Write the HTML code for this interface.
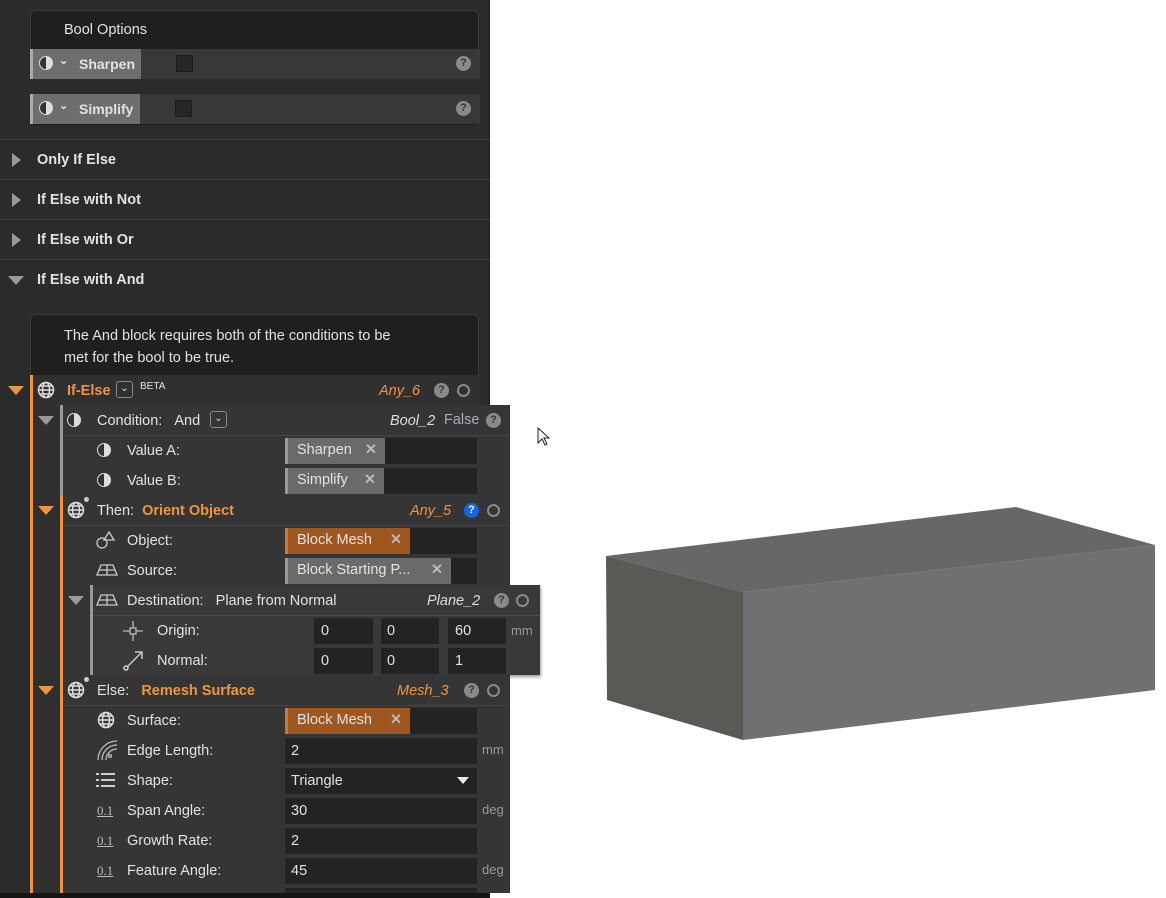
<!DOCTYPE html><html><head><style>
*{margin:0;padding:0;box-sizing:border-box}
body{width:1166px;height:898px;background:#fff;position:relative;overflow:hidden;font-family:"Liberation Sans",sans-serif;font-size:14px;color:#e2e2e2}
.a{position:absolute}
.hdr{position:absolute;left:0;width:490px;height:40px;border-top:1px solid #3e3e3e;font-weight:bold;font-size:14.5px;padding:12px 0 0 37px}
.tri{position:absolute;width:0;height:0}
.tr{border-top:7px solid transparent;border-bottom:7px solid transparent;border-left:9px solid #9a9a9a}
.td{border-left:8px solid transparent;border-right:8px solid transparent;border-top:9px solid #9a9a9a}
.to{border-left:8px solid transparent;border-right:8px solid transparent;border-top:9px solid #f0953f}
.q{position:absolute;width:15px;height:15px;border-radius:50%;background:#8a8a8a;color:#333;font-size:11px;font-weight:bold;text-align:center;line-height:15px}
.o{position:absolute;width:13px;height:13px;border-radius:50%;border:2.5px solid #8a8a8a}
.fld{position:absolute;height:26px;background:#232323}
.chip{position:absolute;height:26px;background:#6a6a6a;border-left:3px solid #9a9a9a;padding:4px 0 0 9px;font-size:14.5px}
.chip.or{background:#a0561f;border-left-color:#c77a3a}
.x{position:absolute;right:8px;top:4px;color:#bbb;font-weight:bold}
.lbl{position:absolute;font-size:14.5px}
.ital{font-style:italic;color:#f0953f;position:absolute;font-size:14.5px}
.org{color:#f0953f}
.half{position:absolute;width:14px;height:14px;border-radius:50%;border:1.5px solid #ddd;background:linear-gradient(90deg,#333 50%,#ddd 50%)}
.unit{position:absolute;color:#9a9a9a;font-size:13px}
</style></head><body>
<div class="a" style="left:0;top:0;width:490px;height:893px;background:#2b2b2b;border-right:1px solid #1e1e1e"></div>
<div class="a" style="left:0;top:893px;width:490px;height:5px;background:#151515"></div>
<!-- bool options -->
<div class="a" style="left:30px;top:10px;width:449px;height:115px;background:#1f1f1f;border:1px solid #3a3a3a;border-bottom:none;border-radius:6px 6px 0 0"></div>
<div class="lbl" style="left:64px;top:22px">Bool Options</div>
<div class="a" style="left:30px;top:49px;width:450px;height:30px;background:#383838"></div>
<div class="a" style="left:30px;top:94px;width:450px;height:30px;background:#383838"></div>
<div class="a" style="left:30px;top:79px;width:450px;height:15px;background:#2b2b2b"></div>
<div class="a" style="left:30px;top:49px;width:111px;height:30px;background:#6e6e6e;border-left:3px solid #aaa"></div>
<div class="a" style="left:30px;top:94px;width:110px;height:30px;background:#6e6e6e;border-left:3px solid #aaa"></div>
<div class="half" style="left:39px;top:56px"></div><div class="a" style="left:59px;top:54px;font-size:11px;font-weight:bold">⌄</div>
<div class="half" style="left:39px;top:101px"></div><div class="a" style="left:59px;top:99px;font-size:11px;font-weight:bold">⌄</div>
<div class="lbl" style="left:79px;top:56px;font-weight:bold;font-size:14px">Sharpen</div>
<div class="lbl" style="left:79px;top:101px;font-weight:bold;font-size:14px">Simplify</div>
<div class="a" style="left:176px;top:55px;width:17px;height:17px;background:#262626;border:1px solid #1c1c1c"></div>
<div class="a" style="left:175px;top:100px;width:17px;height:17px;background:#262626;border:1px solid #1c1c1c"></div>
<div class="q" style="left:456px;top:56px">?</div><div class="q" style="left:456px;top:101px">?</div>
<!-- headers -->
<div class="hdr" style="top:139px">Only If Else</div><div class="tri tr" style="left:12px;top:153px"></div>
<div class="hdr" style="top:179px">If Else with Not</div><div class="tri tr" style="left:12px;top:193px"></div>
<div class="hdr" style="top:219px">If Else with Or</div><div class="tri tr" style="left:12px;top:233px"></div>
<div class="hdr" style="top:259px">If Else with And</div><div class="tri td" style="left:8px;top:276px"></div>
<!-- text card -->
<div class="a" style="left:30px;top:314px;width:449px;height:62px;background:#1f1f1f;border:1px solid #3a3a3a;border-bottom:none;border-radius:6px 6px 0 0"></div>
<div class="lbl" style="left:64px;top:325px;line-height:22px">The And block requires both of the conditions to be<br>met for the bool to be true.</div>
<!-- if-else -->
<div class="a" style="left:30px;top:375px;width:450px;height:518px;background:#303030;border-left:3px solid #f0953f"></div>
<div class="tri to" style="left:8px;top:386px"></div>
<svg class="a" style="left:37px;top:381px" width="18" height="18" viewBox="0 0 18 18" fill="none" stroke="#ddd" stroke-width="1.5"><circle cx="9" cy="9" r="7.5"/><ellipse cx="9" cy="9" rx="3.5" ry="7.5"/><path d="M1.5 9h15M3 5h12M3 13h12"/></svg>
<div class="lbl org" style="left:67px;top:383px;font-weight:bold">If-Else</div>
<div class="a" style="left:116px;top:381px;width:17px;height:17px;border:1.5px solid #888;border-radius:3px;font-size:10px;text-align:center;line-height:13px">⌄</div>
<div class="a" style="left:140px;top:381px;font-size:10px">BETA</div>
<div class="ital" style="left:379px;top:383px">Any_6</div>
<div class="q" style="left:434px;top:383px">?</div><div class="o" style="left:457px;top:384px"></div>
<!-- condition block -->
<div class="a" style="left:60px;top:405px;width:450px;height:90px;background:#353535;border-left:3px solid #999"></div>
<div class="a" style="left:63px;top:435px;width:447px;height:1px;background:#454545"></div>
<div class="tri td" style="left:38px;top:416px"></div>
<div class="half" style="left:67px;top:413px"></div>
<div class="lbl" style="left:97px;top:413px">Condition:&nbsp;&nbsp;&nbsp;And</div>
<div class="a" style="left:210px;top:411px;width:17px;height:17px;border:1.5px solid #888;border-radius:3px;font-size:10px;text-align:center;line-height:13px">⌄</div>
<div class="ital" style="left:390px;top:413px;color:#ddd">Bool_2</div>
<div class="lbl" style="left:444px;top:412px;color:#aab">False</div>
<div class="q" style="left:486px;top:413px">?</div>
<div class="half" style="left:97px;top:443px"></div><div class="lbl" style="left:127px;top:443px">Value A:</div>
<div class="half" style="left:97px;top:473px"></div><div class="lbl" style="left:127px;top:473px">Value B:</div>
<div class="fld" style="left:285px;top:438px;width:192px"></div><div class="chip" style="left:285px;top:438px;width:100px">Sharpen<span class="x">✕</span></div>
<div class="fld" style="left:285px;top:468px;width:192px"></div><div class="chip" style="left:285px;top:468px;width:99px">Simplify<span class="x">✕</span></div>
<!-- then block -->
<div class="a" style="left:60px;top:495px;width:450px;height:180px;background:#353535;border-left:3px solid #f0953f"></div>
<div class="a" style="left:63px;top:525px;width:447px;height:1px;background:#454545"></div>
<div class="tri to" style="left:38px;top:506px"></div>
<svg class="a" style="left:67px;top:501px" width="18" height="18" viewBox="0 0 18 18" fill="none" stroke="#ddd" stroke-width="1.5"><circle cx="9" cy="9" r="7.5"/><ellipse cx="9" cy="9" rx="3.5" ry="7.5"/><path d="M1.5 9h15M3 5h12M3 13h12"/></svg>
<div class="a" style="left:84px;top:497px;width:5px;height:5px;border-radius:50%;background:#ccc"></div>
<div class="lbl" style="left:97px;top:503px">Then:&nbsp;&nbsp;<b class="org">Orient Object</b></div>
<div class="ital" style="left:410px;top:503px">Any_5</div>
<div class="q" style="left:464px;top:503px;background:#1565e0;color:#fff">?</div><div class="o" style="left:487px;top:504px"></div>
<svg class="a" style="left:95px;top:530px" width="22" height="20" fill="none" stroke="#ccc" stroke-width="1.3"><circle cx="7" cy="13" r="5"/><path d="M14 2l5 8h-10z"/></svg>
<div class="lbl" style="left:127px;top:533px">Object:</div>
<svg class="a" style="left:96px;top:563px" width="22" height="14" fill="none" stroke="#ccc" stroke-width="1.3"><path d="M5 2h12l4 10H1z M3 7h16 M11 2v10"/></svg>
<div class="lbl" style="left:127px;top:563px">Source:</div>
<div class="fld" style="left:285px;top:528px;width:192px"></div><div class="chip or" style="left:285px;top:528px;width:125px">Block Mesh<span class="x">✕</span></div>
<div class="fld" style="left:285px;top:558px;width:192px"></div><div class="chip" style="left:285px;top:558px;width:166px">Block Starting P...<span class="x">✕</span></div>
<!-- destination -->
<div class="a" style="left:90px;top:585px;width:450px;height:90px;background:#393939;border-left:3px solid #999;box-shadow:1px 2px 3px rgba(0,0,0,.4)"></div>
<div class="a" style="left:93px;top:615px;width:447px;height:1px;background:#4a4a4a"></div>
<div class="tri td" style="left:68px;top:596px"></div>
<svg class="a" style="left:96px;top:593px" width="22" height="14" fill="none" stroke="#ccc" stroke-width="1.3"><path d="M5 2h12l4 10H1z M3 7h16 M11 2v10"/></svg>
<div class="lbl" style="left:127px;top:593px">Destination:&nbsp;&nbsp;&nbsp;Plane from Normal</div>
<div class="ital" style="left:427px;top:593px;color:#ddd">Plane_2</div>
<div class="q" style="left:494px;top:593px">?</div><div class="o" style="left:516px;top:594px"></div>
<svg class="a" style="left:122px;top:620px" width="22" height="22" fill="none" stroke="#bbb" stroke-width="1.3"><path d="M11 1v7M11 14v7M1 11h7M14 11h7"/><rect x="8" y="8" width="6" height="6"/></svg>
<div class="lbl" style="left:157px;top:623px">Origin:</div>
<svg class="a" style="left:122px;top:648px" width="24" height="24" fill="none" stroke="#ccc" stroke-width="1.5"><path d="M5 19L20 4M13 4h7v7"/><circle cx="4" cy="20" r="2"/></svg>
<div class="lbl" style="left:157px;top:653px">Normal:</div>
<div class="fld" style="left:314px;top:618px;width:59px"></div><div class="lbl" style="left:321px;top:623px">0</div>
<div class="fld" style="left:381px;top:618px;width:58px"></div><div class="lbl" style="left:387px;top:623px">0</div>
<div class="fld" style="left:448px;top:618px;width:58px"></div><div class="lbl" style="left:455px;top:623px">60</div>
<div class="unit" style="left:511px;top:623px">mm</div>
<div class="fld" style="left:314px;top:648px;width:59px"></div><div class="lbl" style="left:321px;top:653px">0</div>
<div class="fld" style="left:381px;top:648px;width:58px"></div><div class="lbl" style="left:387px;top:653px">0</div>
<div class="fld" style="left:448px;top:648px;width:58px"></div><div class="lbl" style="left:455px;top:653px">1</div>
<!-- else block -->
<div class="a" style="left:60px;top:675px;width:450px;height:218px;background:#353535;border-left:3px solid #f0953f"></div>
<div class="a" style="left:63px;top:705px;width:447px;height:1px;background:#454545"></div>
<div class="tri to" style="left:38px;top:686px"></div>
<svg class="a" style="left:67px;top:681px" width="18" height="18" viewBox="0 0 18 18" fill="none" stroke="#ddd" stroke-width="1.5"><circle cx="9" cy="9" r="7.5"/><ellipse cx="9" cy="9" rx="3.5" ry="7.5"/><path d="M1.5 9h15M3 5h12M3 13h12"/></svg>
<div class="a" style="left:84px;top:677px;width:5px;height:5px;border-radius:50%;background:#ccc"></div>
<div class="lbl" style="left:97px;top:683px">Else:&nbsp;&nbsp;&nbsp;<b class="org">Remesh Surface</b></div>
<div class="ital" style="left:397px;top:683px">Mesh_3</div>
<div class="q" style="left:464px;top:683px">?</div><div class="o" style="left:487px;top:684px"></div>
<svg class="a" style="left:97px;top:711px" width="18" height="18" viewBox="0 0 18 18" fill="none" stroke="#ddd" stroke-width="1.5"><circle cx="9" cy="9" r="7.5"/><ellipse cx="9" cy="9" rx="3.5" ry="7.5"/><path d="M1.5 9h15M3 5h12M3 13h12"/></svg>
<div class="lbl" style="left:127px;top:713px">Surface:</div>
<div class="fld" style="left:285px;top:708px;width:192px"></div><div class="chip or" style="left:285px;top:708px;width:125px">Block Mesh<span class="x">✕</span></div>
<svg class="a" style="left:96px;top:739px" width="22" height="22" fill="none" stroke="#bbb" stroke-width="1.3"><path d="M2 21A19 19 0 0 1 21 2M6 21A15 15 0 0 1 21 6M10 21A11 11 0 0 1 21 10"/><circle cx="14" cy="17" r="1.5"/></svg>
<div class="lbl" style="left:127px;top:743px">Edge Length:</div>
<div class="fld" style="left:285px;top:738px;width:192px"></div><div class="lbl" style="left:291px;top:743px">2</div><div class="unit" style="left:482px;top:742px">mm</div>
<svg class="a" style="left:96px;top:772px" width="20" height="16" fill="#ccc"><rect x="0" y="1" width="3" height="2"/><rect x="5" y="1" width="14" height="2"/><rect x="0" y="7" width="3" height="2"/><rect x="5" y="7" width="14" height="2"/><rect x="0" y="13" width="3" height="2"/><rect x="5" y="13" width="14" height="2"/></svg>
<div class="lbl" style="left:127px;top:773px">Shape:</div>
<div class="fld" style="left:285px;top:768px;width:192px"></div><div class="lbl" style="left:291px;top:773px">Triangle</div>
<div class="tri" style="left:457px;top:777px;border-left:6px solid transparent;border-right:6px solid transparent;border-top:7px solid #eee"></div>
<div class="lbl" style="left:97px;top:803px;font-family:'Liberation Serif',serif;font-size:13px;color:#bbb;text-decoration:underline">0.1</div><div class="lbl" style="left:127px;top:803px">Span Angle:</div>
<div class="fld" style="left:285px;top:798px;width:192px"></div><div class="lbl" style="left:291px;top:803px">30</div><div class="unit" style="left:482px;top:802px">deg</div>
<div class="lbl" style="left:97px;top:833px;font-family:'Liberation Serif',serif;font-size:13px;color:#bbb;text-decoration:underline">0.1</div><div class="lbl" style="left:127px;top:833px">Growth Rate:</div>
<div class="fld" style="left:285px;top:828px;width:192px"></div><div class="lbl" style="left:291px;top:833px">2</div>
<div class="lbl" style="left:97px;top:863px;font-family:'Liberation Serif',serif;font-size:13px;color:#bbb;text-decoration:underline">0.1</div><div class="lbl" style="left:127px;top:863px">Feature Angle:</div>
<div class="fld" style="left:285px;top:858px;width:192px"></div><div class="lbl" style="left:291px;top:863px">45</div><div class="unit" style="left:482px;top:862px">deg</div>
<div class="fld" style="left:285px;top:888px;width:192px;height:5px"></div>
<!-- cursor -->
<svg class="a" style="left:537px;top:427px" width="14" height="20"><path d="M1 1v15l4-4 3 6 2-1-3-6h5z" fill="#fff" stroke="#222" stroke-width="1"/></svg>
<!-- box -->
<svg class="a" style="left:0;top:0" width="1166" height="898"><polygon points="606,556 1016,507 1155,545 743,592" fill="#676767"/><polygon points="606,556 743,592 743,740 607,700" fill="#5a5955"/><polygon points="743,592 1155,545 1155,690 743,740" fill="#6f7071"/></svg>
</body></html>
